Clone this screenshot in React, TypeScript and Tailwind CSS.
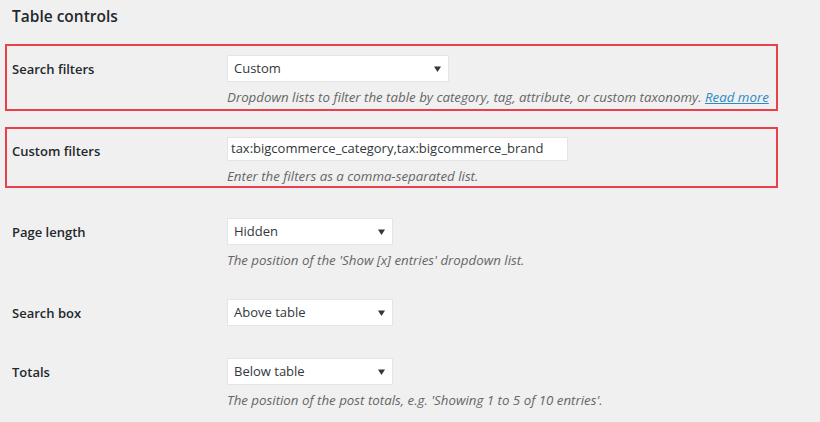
import type { ReactNode } from 'react'

const font = { fontFamily: '"Open Sans", "Noto Sans", sans-serif' }

function Arrow() {
  return (
    <svg width="7" height="6" viewBox="0 0 7 6" className="shrink-0">
      <path d="M0 0.5 L7 0.5 L3.5 6 Z" fill="#32373c" />
    </svg>
  )
}

function Select({ value, width }: { value: string; width: string }) {
  return (
    <div
      className={`${width} h-[27px] bg-white border border-[#e4e4e4] flex items-center justify-between pl-[6px] pr-[7px] text-[13px] text-[#32373c]`}
    >
      <span>{value}</span>
      <Arrow />
    </div>
  )
}

function Row({
  label,
  highlight,
  className,
  children,
  desc,
}: {
  label: string
  highlight?: boolean
  className: string
  children: ReactNode
  desc?: ReactNode
}) {
  return (
    <div
      className={`w-[773px] flex border-2 pl-[5px] ${
        highlight ? 'border-[#e8414b]' : 'border-transparent'
      } ${className}`}
    >
      <div className="w-[215px] shrink-0 text-[13px] font-semibold text-[#23282d] pt-[5px]">
        {label}
      </div>
      <div className="flex flex-col">
        {children}
        {desc && (
          <p className="mt-[6px] text-[13.3px] leading-[18px] italic text-[#666]">{desc}</p>
        )}
      </div>
    </div>
  )
}

export default function App() {
  return (
    <div className="w-[820px] h-[422px] bg-[#f0f0f0] pl-[5px] pt-[4px] overflow-hidden" style={font}>
      <h2 className="pl-[7px] text-[15.5px] leading-[24px] font-semibold text-[#23282d]">Table controls</h2>

      <Row
        label="Search filters"
        highlight
        className="mt-[16px] pt-[9px] pb-[3px]"
        desc={
          <>
            Dropdown lists to filter the table by category, tag, attribute, or custom taxonomy.{' '}
            <a className="underline text-[#2e8ac4]">Read more</a>
          </>
        }
      >
        <Select value="Custom" width="w-[222px]" />
      </Row>

      <Row
        label="Custom filters"
        highlight
        className="mt-[16px] pt-[8px] pb-[1px]"
        desc="Enter the filters as a comma-separated list."
      >
        <div className="w-[341px] h-[24px] bg-white border border-[#e4e4e4] flex items-center pl-[3px] text-[13px] text-[#32373c]">
          tax:bigcommerce_category,tax:bigcommerce_brand
        </div>
      </Row>

      <Row
        label="Page length"
        className="mt-[19px] pt-[9px]"
        desc="The position of the 'Show [x] entries' dropdown list."
      >
        <Select value="Hidden" width="w-[166px]" />
      </Row>

      <Row label="Search box" className="mt-[17px] pt-[9px]">
        <Select value="Above table" width="w-[166px]" />
      </Row>

      <Row
        label="Totals"
        className="mt-[19px] pt-[9px]"
        desc="The position of the post totals, e.g. 'Showing 1 to 5 of 10 entries'."
      >
        <Select value="Below table" width="w-[166px]" />
      </Row>
    </div>
  )
}
